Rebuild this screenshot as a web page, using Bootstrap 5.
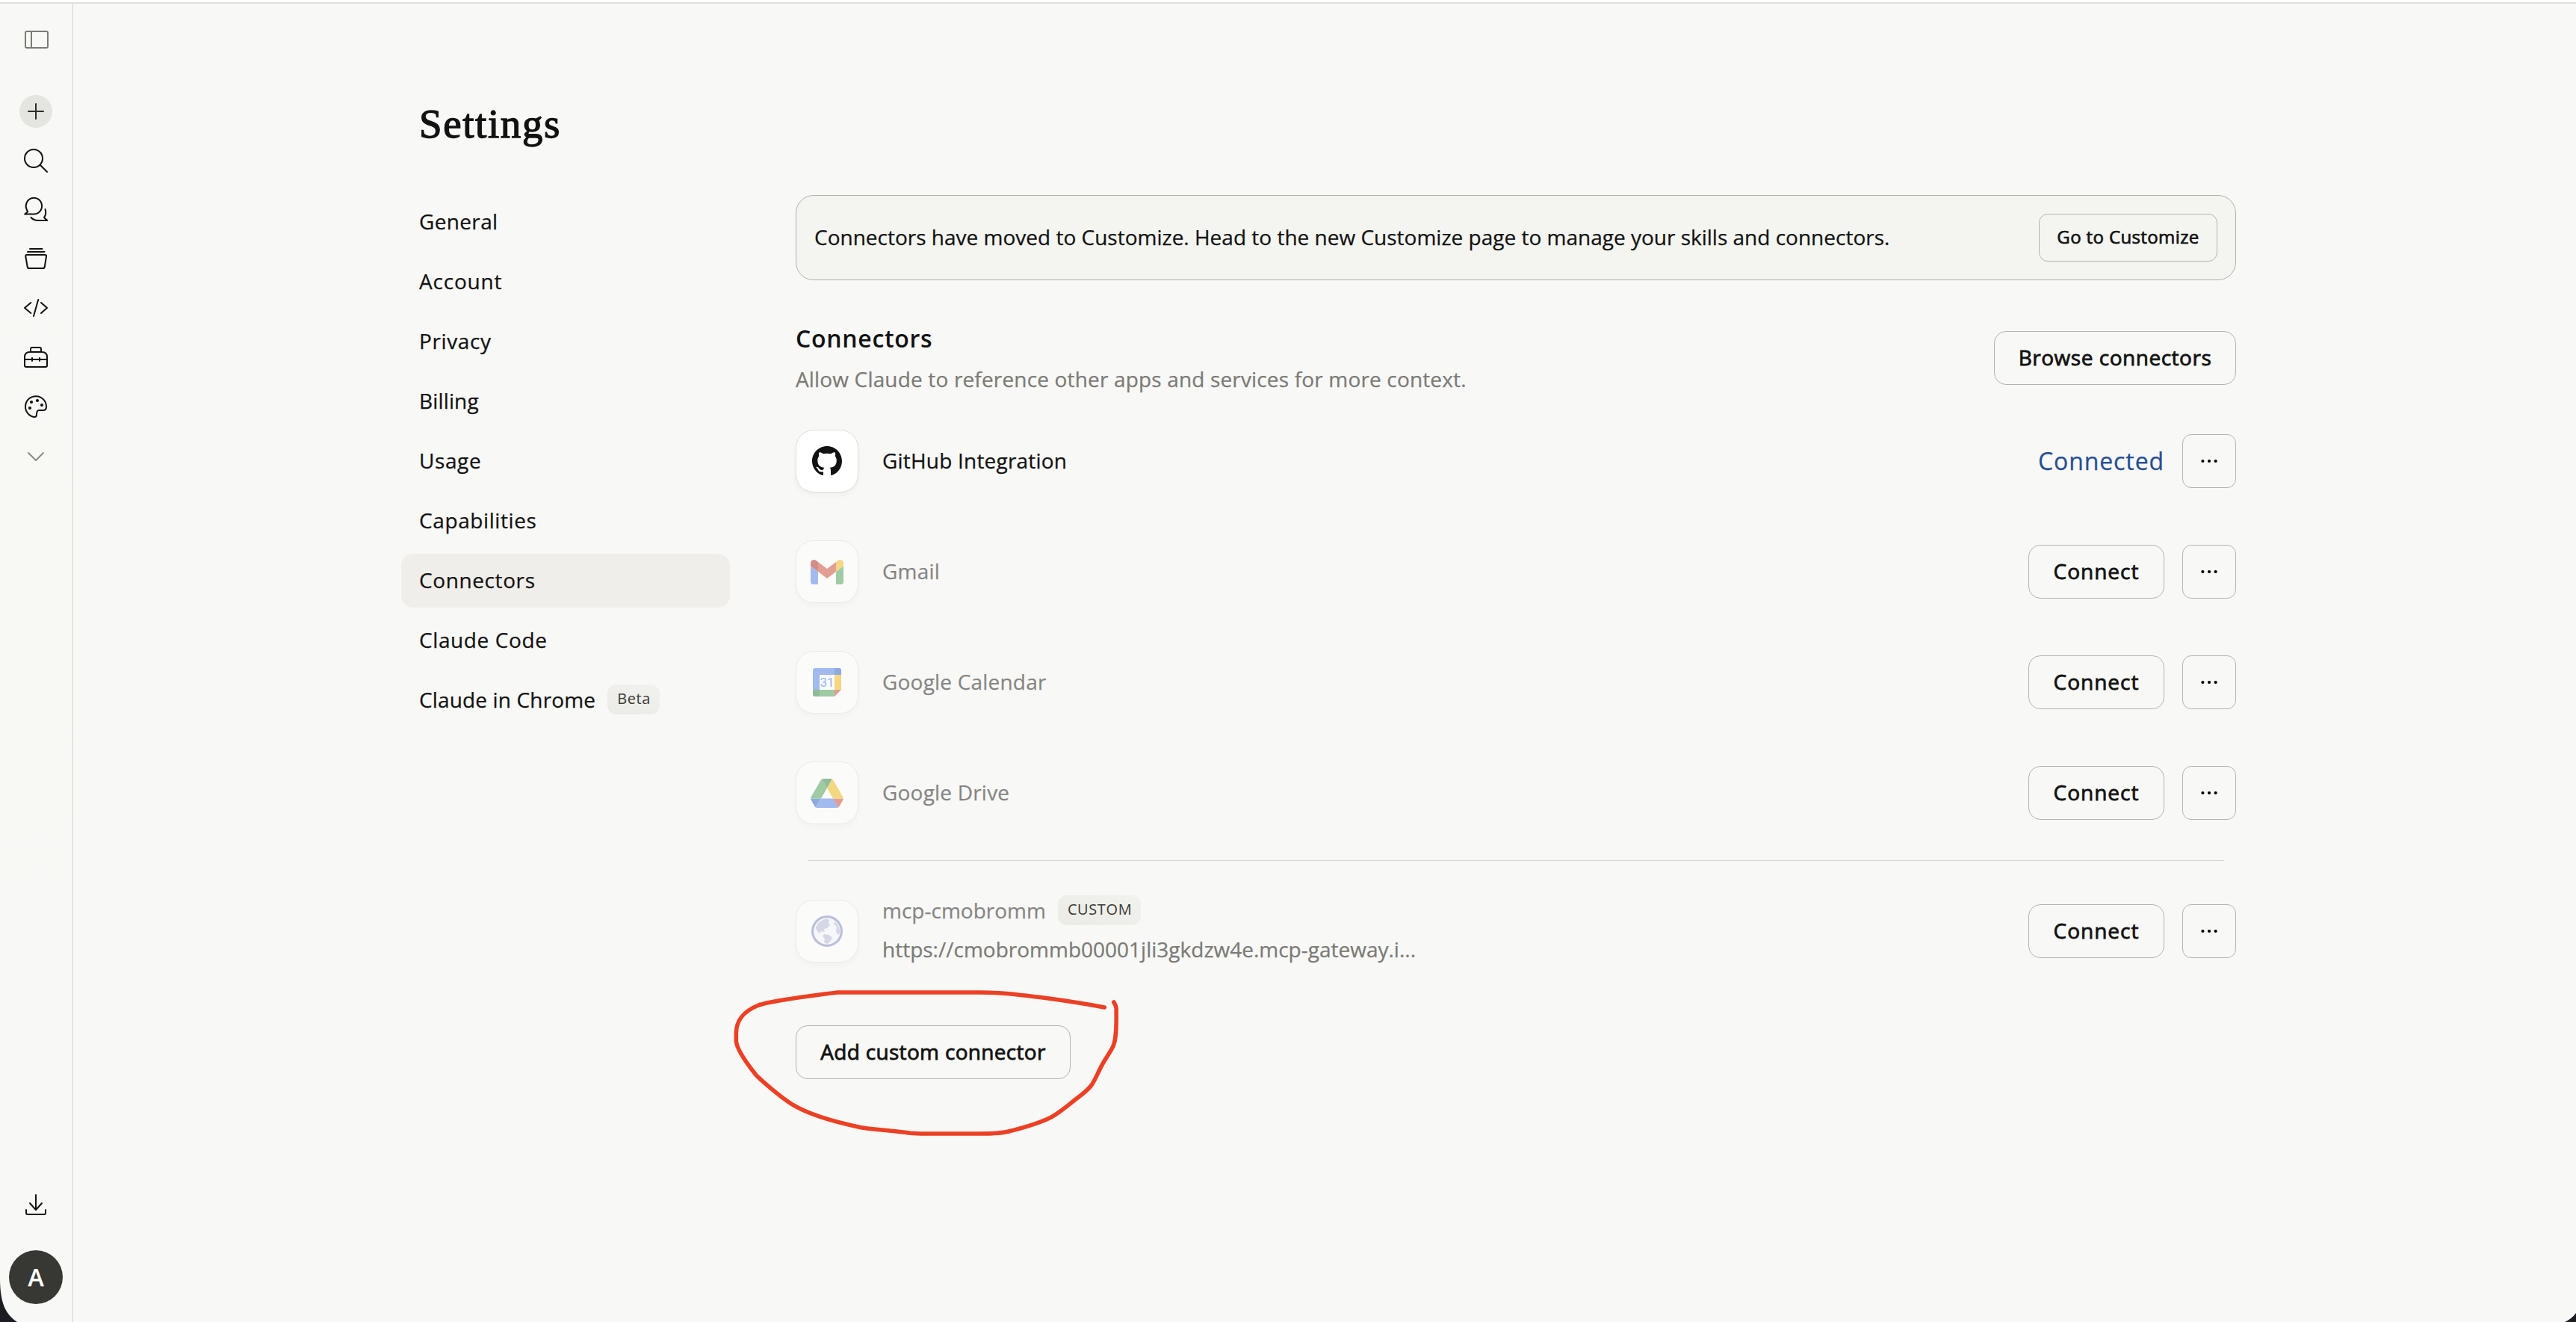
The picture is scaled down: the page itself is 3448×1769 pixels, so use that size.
<!DOCTYPE html>
<html lang="en">
<head>
<meta charset="utf-8">
<meta name="viewport" content="width=device-width, initial-scale=1">
<title>Settings</title>
<link href="https://cdn.jsdelivr.net/npm/bootstrap@5.3.0/dist/css/bootstrap.min.css" rel="stylesheet">
<style>
  body { background:#f8f8f6; color:#121212; font-family:"Open Sans","Noto Sans",sans-serif; font-size:28px; line-height:40px; height:1769px; overflow:hidden; -webkit-text-stroke:.25px currentColor; }
  .topline { height:5px; background:#fff; border-bottom:2px solid #e0e0de; }
  .frame { height:1764px; }
  .rail { width:98px; border-right:1px solid #d2d2d0; background:linear-gradient(#f8f8f6,#f8f9f5 45%,#f8f8f6); padding:26px 0 24px 26px; }
  .rail svg { width:44px; height:44px; display:block; fill:none; stroke:#121212; stroke-width:2; stroke-linecap:round; stroke-linejoin:round; }
  .rail-list { gap:22px; margin-top:52px; }
  .avatar { width:72px; height:72px; margin:39px 0 0 -14px; background:#373734; color:#fff; font-weight:600; font-size:32px; }
  .content { padding:131px 455px 0 439px; }
  .page-title { font:400 55px/60px "Liberation Serif",serif; letter-spacing:1.6px; -webkit-text-stroke:1.3px currentColor; margin:0 0 65px 24px; }
  .side-nav { width:440px; gap:8px; margin-right:88px; }
  .side-nav .nav-link { height:72px; padding:0 0 2px 24px; border-radius:16px; color:#121212; display:flex; align-items:center; letter-spacing:.6px; }
  .side-nav .nav-link.active { background:#efeeea; color:#121212; }
  .side-nav .t-a { letter-spacing:.35px; } .side-nav .t-b { letter-spacing:.8px; } .side-nav .t-c { letter-spacing:.15px; }
  .tag { height:40px; border-radius:12px; background:linear-gradient(20deg,#ebebe6,#f1f2ee); color:#3a3a37; font-size:20px; line-height:38px; padding:0 12px 0 13px; letter-spacing:.6px; -webkit-text-stroke:0; }
  .notice { height:114px; border:1px solid #b0b0ac; border-radius:24px; background:#f4f5f0; padding:0 24px; }
  .notice-text { padding-bottom:3px; }
  .ob { --bs-btn-color:#121212; --bs-btn-border-color:#b3b3b0; --bs-btn-font-size:28px; --bs-btn-line-height:40px; --bs-btn-padding-x:0; --bs-btn-padding-y:0; --bs-btn-border-radius:16px; height:72px; width:182px; padding-bottom:2px; letter-spacing:.5px; -webkit-text-stroke:.8px currentColor; white-space:nowrap; flex:none; }
  .ob-go { width:239px; height:64px; --bs-btn-font-size:24px; --bs-btn-border-radius:12px; letter-spacing:.38px; -webkit-text-stroke-width:.7px; }
  .ob-browse { width:324px; margin-top:10px; letter-spacing:.52px; }
  .ob-connect { letter-spacing:1px; }
  .ob-add { width:368px; letter-spacing:.32px; margin-top:84px; align-self:flex-start; }
  .ob-more { width:72px; --bs-btn-border-radius:12px; padding:0; }
  .ob-more svg { display:block; margin:auto; }
  .sec-head { margin-top:58px; height:94px; }
  .sec-title { font-size:32px; line-height:40px; font-weight:600; letter-spacing:.7px; margin:0 0 14px; -webkit-text-stroke:0; }
  .sec-sub { color:#7b7b76; letter-spacing:.16px; }
  .conn-list { gap:64px; margin-top:48px; }
  .conn { height:84px; }
  .tile { width:84px; height:84px; border-radius:24px; background:#fff; border:1px solid #dededb; box-shadow:0 4px 6px rgba(0,0,0,.04); margin-right:32px; flex:none; }
  .faded .tile, .faded .conn-name { opacity:.5; }
  .conn-name { letter-spacing:.2px; padding-bottom:3px; }
  .connected { color:#264e94; font-size:32px; letter-spacing:.9px; padding-bottom:1px; -webkit-text-stroke:.25px currentColor; }
  .rule { height:1px; background:#d6d6d3; margin:48px 16px 52px; }
  .conn-name.slug { letter-spacing:0; padding:0; }
  .url { color:#7b7b76; margin-top:12px; }
  .overlay { position:absolute; left:0; top:0; pointer-events:none; }
</style>
</head>
<body>
<div class="topline"></div>
<div class="frame d-flex">
  <aside class="rail d-flex flex-column flex-shrink-0">
    <svg viewBox="26 31 44 44" style="stroke:#7b7b76"><rect x="34" y="42" width="30" height="22" rx="2"/><path d="M42 42V64"/></svg>
    <div class="rail-list d-flex flex-column">
      <svg viewBox="26 127 44 44"><circle cx="48" cy="149" r="22" fill="#e4e4e1" stroke="none"/><path d="M38 149H58M48 139V159" stroke="#2b2b29"/></svg>
      <svg viewBox="26 193 44 44"><circle cx="45" cy="212" r="12"/><path d="M54 221L63 230"/></svg>
      <svg viewBox="26 259 44 44"><path d="M46 286.5A10.7 10.9 0 1 0 35.6 280Q36.2 282 37.2 283.2L33.2 286.5Z"/><path d="M60.5 280Q62.6 286 59 291L63.2 295H51Q45 295 41.5 291"/></svg>
      <svg viewBox="26 325 44 44"><path d="M40 333H56.5M37 337H59.5M36 341H60.3Q62.3 341 62 343L59.8 357Q59.5 359 57.5 359H39Q37 359 36.7 357L34.3 343Q34 341 36 341Z"/></svg>
      <svg viewBox="26 391 44 44"><path d="M41.3 405L33 412L41.3 419M55 405L63 412L55 419M51.2 401L45 423"/></svg>
      <svg viewBox="26 457 44 44"><path d="M41 471V467Q41 465 43 465H53Q55 465 55 467V471M40 471H56Q63 471 63 478V489Q63 491 61 491H35Q33 491 33 489V478Q33 471 40 471ZM33 481H63M43 479V483M53 479V483"/></svg>
      <svg viewBox="26 523 44 44"><path d="M62 544A14 14 0 1 0 46 558Q49 558 49 555Q49 549 52 549H58Q62 549 62 544Z"/><g fill="#121212" stroke="none"><circle cx="42" cy="538" r="2.1"/><circle cx="50" cy="536" r="2.1"/><circle cx="56" cy="542" r="2.1"/><circle cx="40" cy="546" r="2.1"/></g></svg>
      <svg viewBox="26 589 44 44"><path d="M38 606L48 616L58 606" stroke="#8b8b88"/></svg>
    </div>
    <svg class="mt-auto" viewBox="26 1590 44 44"><path d="M48 1599V1619M40 1610L48 1619L56 1610M35 1619V1623Q35 1625 37 1625H59Q61 1625 61 1623V1619"/></svg>
    <div class="avatar rounded-circle d-flex align-items-center justify-content-center flex-shrink-0">A</div>
  </aside>

  <main class="content flex-grow-1">
    <h1 class="page-title">Settings</h1>
    <div class="d-flex align-items-start">
      <nav class="side-nav nav flex-column flex-shrink-0">
        <a class="nav-link t-a">General</a>
        <a class="nav-link t-b">Account</a>
        <a class="nav-link">Privacy</a>
        <a class="nav-link t-c">Billing</a>
        <a class="nav-link">Usage</a>
        <a class="nav-link">Capabilities</a>
        <a class="nav-link active">Connectors</a>
        <a class="nav-link">Claude Code</a>
        <a class="nav-link t-c">Claude in Chrome<span class="tag ms-3">Beta</span></a>
      </nav>

      <section class="d-flex flex-column flex-grow-1">
        <div class="notice d-flex align-items-center justify-content-between">
          <span class="notice-text">Connectors have moved to Customize. Head to the new Customize page to manage your skills and connectors.</span>
          <button class="btn ob ob-go">Go to Customize</button>
        </div>

        <div class="sec-head d-flex align-items-start justify-content-between">
          <div>
            <h2 class="sec-title">Connectors</h2>
            <div class="sec-sub">Allow Claude to reference other apps and services for more context.</div>
          </div>
          <button class="btn ob ob-browse">Browse connectors</button>
        </div>

        <div class="conn-list d-flex flex-column">
          <div class="conn d-flex align-items-center">
            <div class="tile d-flex align-items-center justify-content-center"><svg width="40" height="40" viewBox="0 0 16 16" fill="#121212"><path d="M8 0C3.58 0 0 3.58 0 8c0 3.54 2.29 6.53 5.47 7.59.4.07.55-.17.55-.38 0-.19-.01-.82-.01-1.49-2.01.37-2.53-.49-2.69-.94-.09-.23-.48-.94-.82-1.13-.28-.15-.68-.52-.01-.53.63-.01 1.08.58 1.23.82.72 1.21 1.87.87 2.33.66.07-.52.28-.87.51-1.07-1.78-.2-3.64-.89-3.64-3.95 0-.87.31-1.59.82-2.15-.08-.2-.36-1.02.08-2.12 0 0 .67-.21 2.2.82.64-.18 1.32-.27 2-.27s1.36.09 2 .27c1.53-1.04 2.2-.82 2.2-.82.44 1.1.16 1.92.08 2.12.51.56.82 1.27.82 2.15 0 3.07-1.87 3.75-3.65 3.95.29.25.54.73.54 1.48 0 1.07-.01 1.93-.01 2.2 0 .21.15.46.55.38A8.01 8.01 0 0 0 16 8c0-4.42-3.58-8-8-8"/></svg></div>
            <span class="conn-name">GitHub Integration</span>
            <span class="connected ms-auto me-4">Connected</span>
            <button class="btn ob ob-more" aria-label="More"><svg width="24" height="6" viewBox="0 0 24 6"><circle cx="3.4" cy="3" r="2.1"/><circle cx="12" cy="3" r="2.1"/><circle cx="20.6" cy="3" r="2.1"/></svg></button>
          </div>

          <div class="conn faded d-flex align-items-center">
            <div class="tile d-flex align-items-center justify-content-center"><svg width="44" height="33" viewBox="52 42 88 66"><path fill="#4e7ee6" d="M58 108h14V74L52 59v43c0 3.32 2.69 6 6 6"/><path fill="#46a052" d="M120 108h14c3.32 0 6-2.69 6-6V59l-20 15"/><path fill="#f0b812" d="M120 48v26l20-15v-8c0-7.42-8.47-11.65-14.4-7.2"/><path fill="#d04632" d="M72 74V48l24 18 24-18v26L96 92"/><path fill="#aa261a" d="M52 51v8l20 15V48l-5.6-4.2c-5.94-4.45-14.4-.22-14.4 7.2"/></svg></div>
            <span class="conn-name">Gmail</span>
            <button class="btn ob ob-connect ms-auto me-4">Connect</button>
            <button class="btn ob ob-more" aria-label="More"><svg width="24" height="6" viewBox="0 0 24 6"><circle cx="3.4" cy="3" r="2.1"/><circle cx="12" cy="3" r="2.1"/><circle cx="20.6" cy="3" r="2.1"/></svg></button>
          </div>

          <div class="conn faded d-flex align-items-center">
            <div class="tile d-flex align-items-center justify-content-center"><svg width="38" height="38" viewBox="0 0 38 38"><path fill="#4e7ee6" d="M3 0H29V9H9V29H0V3Q0 0 3 0Z"/><path fill="#2460c4" d="M29 0H35Q38 0 38 3V9H29Z"/><path fill="#f0b812" d="M29 9H38V29H29Z"/><path fill="#46a052" d="M9 29H29V38H9Z"/><path fill="#28803a" d="M0 29H9V38H3Q0 38 0 35Z"/><path fill="#d04632" d="M29 29H38L29 38Z"/><text x="19" y="25" text-anchor="middle" font-family="Roboto,sans-serif" font-size="17" fill="#2f74e0" stroke="none" style="-webkit-text-stroke:.4px #2f74e0">31</text></svg></div>
            <span class="conn-name">Google Calendar</span>
            <button class="btn ob ob-connect ms-auto me-4">Connect</button>
            <button class="btn ob ob-more" aria-label="More"><svg width="24" height="6" viewBox="0 0 24 6"><circle cx="3.4" cy="3" r="2.1"/><circle cx="12" cy="3" r="2.1"/><circle cx="20.6" cy="3" r="2.1"/></svg></button>
          </div>

          <div class="conn faded d-flex align-items-center">
            <div class="tile d-flex align-items-center justify-content-center"><svg width="44" height="39" viewBox="0 0 87.3 78"><path fill="#2460c4" d="m6.6 66.85 3.85 6.65c.8 1.4 1.95 2.5 3.3 3.3l13.75-23.8h-27.5c0 1.55.4 3.1 1.2 4.5z"/><path fill="#46a052" d="m43.65 25-13.75-23.8c-1.35.8-2.5 1.9-3.3 3.3l-25.4 44a9.06 9.06 0 0 0-1.2 4.5h27.5z"/><path fill="#d04632" d="m73.55 76.8c1.35-.8 2.5-1.9 3.3-3.3l1.6-2.75 7.65-13.25c.8-1.4 1.2-2.95 1.2-4.5h-27.5l5.85 11.5z"/><path fill="#28803a" d="m43.65 25 13.75-23.8c-1.35-.8-2.9-1.2-4.5-1.2h-18.5c-1.6 0-3.15.45-4.5 1.2z"/><path fill="#4e7ee6" d="m59.8 53h-32.3l-13.75 23.8c1.35.8 2.9 1.2 4.5 1.2h50.8c1.6 0 3.15-.45 4.5-1.2z"/><path fill="#f0b812" d="m73.4 26.5-12.7-22c-.8-1.4-1.95-2.5-3.3-3.3l-13.75 23.8 16.15 28h27.45c0-1.55-.4-3.1-1.2-4.5z"/></svg></div>
            <span class="conn-name">Google Drive</span>
            <button class="btn ob ob-connect ms-auto me-4">Connect</button>
            <button class="btn ob ob-more" aria-label="More"><svg width="24" height="6" viewBox="0 0 24 6"><circle cx="3.4" cy="3" r="2.1"/><circle cx="12" cy="3" r="2.1"/><circle cx="20.6" cy="3" r="2.1"/></svg></button>
          </div>
        </div>

        <div class="rule"></div>

        <div class="conn faded d-flex align-items-center">
          <div class="tile d-flex align-items-center justify-content-center"><svg width="44" height="44" viewBox="0 0 44 44"><circle cx="22" cy="22" r="19.4" fill="#f6f7fb" stroke="#8288bd" stroke-width="3.2"/><path fill="#b4bad4" d="M9 13Q13 7 21 5.5L25 7L24 11L26 14L22 18L18 19L19 23L14 22L12 25Q8 22 6.5 18ZM32 9Q38 14 39 20V25L36 27L34 22L35 16L31 12ZM18 26L25 27L29 31L26 36L22 39L18 37L19 32L16 29Z"/></svg></div>
          <div class="d-flex flex-column pb-1">
            <div class="d-flex align-items-center"><span class="conn-name slug">mcp-cmobromm</span><span class="tag ms-3">CUSTOM</span></div>
            <div class="url">https://cmobrommb00001jli3gkdzw4e.mcp-gateway.i...</div>
          </div>
          <button class="btn ob ob-connect ms-auto me-4">Connect</button>
          <button class="btn ob ob-more" aria-label="More"><svg width="24" height="6" viewBox="0 0 24 6"><circle cx="3.4" cy="3" r="2.1"/><circle cx="12" cy="3" r="2.1"/><circle cx="20.6" cy="3" r="2.1"/></svg></button>
        </div>

        <button class="btn ob ob-add">Add custom connector</button>
      </section>
    </div>
  </main>
</div>

<!-- Hand-drawn highlight and the rounded window corners -->
<svg class="overlay" width="3448" height="1769" viewBox="0 0 3448 1769" fill="none">
  <path stroke="#ec4025" stroke-width="5.6" stroke-linecap="round" stroke-linejoin="round" d="M1478.3 1348C1430 1339 1370 1331 1337 1328.7Q1325 1328 1311 1328H1122Q1119 1328 1085.8 1332.5C1060 1336 1030 1340 1015.5 1345C993 1354 985.3 1367 985.3 1383V1392C985.3 1403 998 1421 1011.8 1438.3C1020 1447 1045 1468 1060 1477.7C1085 1493 1120 1502 1152.4 1508.7C1175 1512 1205 1514 1219 1516.3Q1225 1517 1240 1517H1311C1330 1517 1344 1516 1352 1513.5C1370 1509 1395 1501 1407 1495C1420 1488 1432 1477 1441 1470C1450 1463 1455 1460 1461 1452C1467 1443 1470 1434 1476 1423.3C1480 1416 1486 1408 1490 1400C1494 1390 1494 1378 1494.2 1365V1350Q1494 1346 1490.8 1341"/>
  <path fill="#1c1d22" d="M0 1715C1 1740 5 1757 23 1769H0ZM3448 1757Q3442 1765 3433 1769H3448Z"/>
</svg>
<script src="https://cdn.jsdelivr.net/npm/bootstrap@5.3.0/dist/js/bootstrap.bundle.min.js"></script>
</body>
</html>
